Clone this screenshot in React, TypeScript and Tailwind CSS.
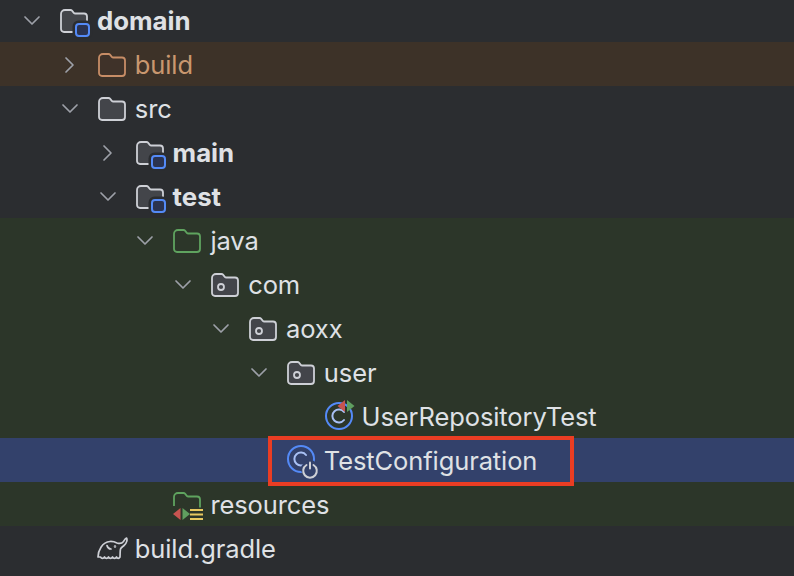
import type { ReactNode } from "react";

const folderPath = "M1 5a4 4 0 0 1 4-4h5.500a2 2 0 0 1 1.500.7l1.800 2.100a2 2 0 0 0 1.500.7H24a3 3 0 0 1 3 3V20a3 3 0 0 1-3 3H4a3 3 0 0 1-3-3z";

function FolderIcon({ stroke, fill = "none" }: { stroke: string; fill?: string }) {
  return (
    <svg width="28" height="24" viewBox="0 0 28 24" fill={fill} stroke={stroke} strokeWidth="1.800">
      <path d={folderPath} />
    </svg>
  );
}

function ModuleFolder() {
  return (
    <svg width="32" height="28" viewBox="0 0 32 28" className="mb-[-4px] mr-[-4px] overflow-visible" fill="none">
      <path d={folderPath} fill="#43454a" stroke="#ced0d6" strokeWidth="1.800" />
      <rect x="15" y="14" width="15" height="13" rx="3.500" fill="#2b3350" stroke="#2b2d30" strokeWidth="5" />
      <rect x="16" y="15" width="13" height="12" rx="3" fill="#2b3350" stroke="#548af7" strokeWidth="2" />
    </svg>
  );
}

function PackageFolder() {
  return (
    <svg width="28" height="24" viewBox="0 0 28 24" fill="none">
      <path d={folderPath} fill="#43454a" stroke="#ced0d6" strokeWidth="1.800" />
      <circle cx="10" cy="14" r="3" stroke="#ced0d6" strokeWidth="1.800" />
    </svg>
  );
}

function ResourcesFolder() {
  return (
    <svg width="32" height="30" viewBox="0 0 32 30" fill="none" className="mb-[-4px] overflow-visible">
      <path d="M1 14V5a4 4 0 0 1 4-4h5.500a2 2 0 0 1 1.500.7l1.800 2.100a2 2 0 0 0 1.500.7H24a3 3 0 0 1 3 3v8" stroke="#5fa35f" strokeWidth="1.800" />
      <path d="M7.500 16v12L0 22z" fill="#c75450" />
      <path d="M9.500 16v12l7.500-6z" fill="#5f9e5f" />
      <path d="M17 18h13M17 22.500h13M17 27h13" stroke="#e8c860" strokeWidth="2" />
    </svg>
  );
}

function ClassIcon({ badge }: { badge: "test" | "config" }) {
  const cy = badge === "test" ? 17 : 16;
  return (
    <svg width="36" height="36" viewBox="0 0 36 36" fill="none" className="overflow-visible">
      <circle cx="14" cy={cy} r="13" stroke="#548af7" strokeWidth="2" />
      <path d={`M19 ${cy - 4}a6.500 6.500 0 1 0 0 8`} stroke="#a9c1f5" strokeWidth="2" strokeLinecap="round" />
      {badge === "test" ? (
        <>
          <path d="M20 1v12l-7.500-6z" fill="#c75450" />
          <path d="M22 1v12l7.500-6z" fill="#5f9e5f" />
        </>
      ) : (
        <>
          <circle cx="23" cy="26" r="9" fill="#33416b" />
          <path d="M19.500 22a6.800 6.800 0 1 0 7 0" stroke="#ced0d6" strokeWidth="2" strokeLinecap="round" />
          <path d="M23 19.500v6" stroke="#ced0d6" strokeWidth="2" strokeLinecap="round" />
        </>
      )}
    </svg>
  );
}

function GradleIcon() {
  return (
    <svg width="32" height="24" viewBox="0 0 32 24" fill="none" stroke="#ced0d6" strokeWidth="1.700" strokeLinejoin="round" strokeLinecap="round" className="ml-[-1px] mr-[-3px]">
      <path d="M1 20C1 14 5 5 13 4.500c3-.2 5 .5 7 1.500 3 1 5 .5 6.500-1.500.7-1 1.500-3 3-3.500 1 1.500.5 5-2.500 7.500-1.500 1.300-3 2-3.500 3.500-.5 2-.3 5-.5 8-1 1.800-2.500 1.800-3.500 0-1 1.800-3 1.800-4 0-1 1.800-3 1.800-4 0-1 1.800-3 1.800-4 0-1 1.800-3 1.800-4 0z" />
      <path d="M10 8.500c.5 2 2 3.500 4 3.500" />
      <circle cx="18" cy="9.500" r="0.400" />
    </svg>
  );
}

function Chevron({ open }: { open?: boolean }) {
  return (
    <svg width="18" height="18" viewBox="0 0 18 18" fill="none" stroke="#9da0a8" strokeWidth="1.700" strokeLinecap="round" strokeLinejoin="round">
      {open === undefined ? null : open ? <path d="M2 5l7 7 7-7" /> : <path d="M5 2l7 7-7 7" />}
    </svg>
  );
}

function Row({ level, open, icon, label, bold, rowClass = "", textClass = "text-[#dfe1e5]", children }: {
  level: number;
  open?: boolean;
  icon: ReactNode;
  label: string;
  bold?: boolean;
  rowClass?: string;
  textClass?: string;
  children?: ReactNode;
}) {
  return (
    <div className={`relative flex h-[44px] items-center pt-[2px] ${rowClass}`} style={{ paddingLeft: 22 + level * 37.8 }}>
      <div className="flex w-[38px] shrink-0 items-center pl-[1px]">
        <Chevron open={open} />
      </div>
      <div className="flex w-[37px] shrink-0 items-center">{icon}</div>
      <span className={`leading-none ${bold ? "text-[25.8px] font-bold" : "text-[25.5px] tracking-[-0.1px]"} ${textClass}`}>{label}</span>
      {children}
    </div>
  );
}

export default function App() {
  return (
    <div className="h-[576px] w-[794px] overflow-hidden bg-[#2b2d30] font-['Inter',sans-serif]">
      <div className="-mt-[2px]">
        <Row level={0} open icon={<ModuleFolder />} label="domain" bold />
        <Row level={1} open={false} icon={<FolderIcon stroke="#c78d66" fill="#3f3229" />} label="build" rowClass="bg-[#3d3228]" textClass="text-[#c9976f]" />
        <Row level={1} open icon={<FolderIcon stroke="#ced0d6" fill="#43454a" />} label="src" />
        <Row level={2} open={false} icon={<ModuleFolder />} label="main" bold />
        <Row level={2} open icon={<ModuleFolder />} label="test" bold />
        <Row level={3} open icon={<FolderIcon stroke="#5fa35f" />} label="java" rowClass="bg-[#2c3629]" />
        <Row level={4} open icon={<PackageFolder />} label="com" rowClass="bg-[#2c3629]" />
        <Row level={5} open icon={<PackageFolder />} label="aoxx" rowClass="bg-[#2c3629]" />
        <Row level={6} open icon={<PackageFolder />} label="user" rowClass="bg-[#2c3629]" />
        <Row level={7} icon={<ClassIcon badge="test" />} label="UserRepositoryTest" rowClass="bg-[#2c3629]" />
        <Row level={6} icon={<ClassIcon badge="config" />} label="TestConfiguration" rowClass="z-10 bg-[#33416b]">
          <div className="absolute left-[268px] top-[-2px] h-[50px] w-[306px] border-[4px] border-[#ea3d23]" />
        </Row>
        <Row level={3} icon={<ResourcesFolder />} label="resources" rowClass="bg-[#2c3629]" />
        <Row level={1} icon={<GradleIcon />} label="build.gradle" />
      </div>
    </div>
  );
}
